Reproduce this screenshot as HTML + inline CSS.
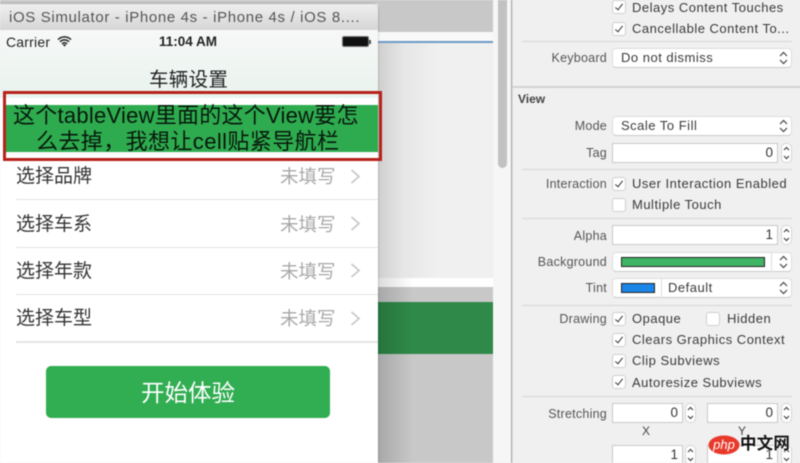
<!DOCTYPE html>
<html><head><meta charset="utf-8">
<style>
html,body{margin:0;padding:0;background:#f0f0f0}
#r{position:relative;width:800px;height:463px;overflow:hidden;background:#f0f0f0;font-family:"Liberation Sans","Noto Sans CJK SC",sans-serif;filter:blur(.45px)}
#r div,#r span.a,#r svg.a{position:absolute}
.t{white-space:nowrap;font-size:13px;line-height:16px;color:#3a3a3a;letter-spacing:.5px}
.l{white-space:nowrap;font-size:12.5px;line-height:16px;color:#555;text-align:right;right:193px;letter-spacing:.25px}
.cb{width:12px;height:12px;background:#fff;border:1px solid #cfcfcf;border-radius:3px;box-sizing:content-box}
.cb.on:after{content:"";position:absolute;left:4px;top:1px;width:3px;height:7px;border:solid #333;border-width:0 1.3px 1.3px 0;transform:rotate(38deg)}
.sel{background:#fff;border:1px solid #dedede;border-bottom-color:#cacaca;border-radius:4px;box-sizing:border-box}
.fld{background:#fff;border:1px solid #c8c8c8;box-sizing:border-box;text-align:right;font-size:13.5px;line-height:18px;padding-right:4px;color:#333}
.st{width:11px;height:20px;background:#fff;border:1px solid #d6d6d6;border-radius:5px;box-sizing:border-box}
.hr{left:522px;width:270px;height:1px;background:#d6d6d6}
.row{left:16px;font-size:19px;line-height:24px;color:#333;white-space:nowrap}
.nf{left:280px;font-size:18.5px;line-height:24px;color:#a8a8a8;white-space:nowrap}
.sp{left:16px;width:362px;height:1px;background:#e4e4e4}
</style></head><body><div id="r">

<!-- middle canvas -->
<div style="left:378px;top:0;width:115px;height:32px;background:#c8c8c8"></div>
<div style="left:378px;top:32px;width:115px;height:246px;background:linear-gradient(90deg,#cfcfcf 0,#e6e6e6 25px,#f0f0f0 60px)"></div>
<div style="left:378px;top:32px;width:115px;height:9px;background:#f8f8f8"></div>
<div style="left:378px;top:41px;width:115px;height:2px;background:#6d9bc6"></div>
<div style="left:378px;top:278px;width:115px;height:9px;background:linear-gradient(90deg,#dcdcdc,#fff 35px)"></div>
<div style="left:378px;top:287px;width:115px;height:15px;background:linear-gradient(90deg,#a8a8a8,#c8c8c8 35px)"></div>
<div style="left:378px;top:302px;width:115px;height:52px;background:linear-gradient(90deg,#26743d,#2f8a49 35px)"></div>
<div style="left:378px;top:354px;width:115px;height:109px;background:linear-gradient(90deg,#a8a8a8,#c8c8c8 35px)"></div>

<!-- scroller -->
<div style="left:493px;top:0;width:18px;height:463px;background:#f6f6f6"></div>
<div style="left:498px;top:-10px;width:9px;height:178px;background:#c2c2c2;border-radius:4.5px"></div>
<div style="left:511px;top:0;width:1px;height:463px;background:#a6a6a6"></div>
<div style="left:512px;top:0;width:1px;height:463px;background:#e0e0e0"></div>

<!-- simulator window -->
<div style="left:0;top:0;width:378px;height:4px;background:#c8c8c8"></div>
<div style="left:0;top:4px;width:378px;height:459px;background:#fff;border-radius:0 6px 0 0;overflow:hidden;box-shadow:0 0 2px rgba(0,0,0,.3)">
  <div style="left:0;top:0;width:378px;height:26px;background:linear-gradient(#eef0ee,#d6d6d6)"></div>
  <div class="t" style="left:9px;top:5px;font-size:15px;line-height:17px;color:#555;letter-spacing:.65px">iOS Simulator - iPhone 4s - iPhone 4s / iOS 8....</div>
  <div style="left:0;top:26px;width:378px;height:68px;background:linear-gradient(#f7f8f7,#e9f3ee)"></div>
</div>
<div class="t" style="left:6px;top:34px;font-size:14px;color:#222;letter-spacing:.2px">Carrier</div>
<svg class="a" style="left:57px;top:36px" width="15" height="11" viewBox="0 0 15 11"><path d="M1 3.600a9 9 0 0 1 13 0M3 5.800a6.200 6.200 0 0 1 9 0M5 8a3.200 3.200 0 0 1 5 0" fill="none" stroke="#222" stroke-width="1.500"/><path d="M7.500 10.600 5.900 8.900a2.200 2.200 0 0 1 3.200 0z" fill="#222"/></svg>
<div class="t" style="left:159px;top:34px;font-size:13.5px;font-weight:bold;color:#222;letter-spacing:0">11:04 AM</div>
<div style="left:342px;top:36px;width:27px;height:11px;background:#111;border:1px solid #777;border-radius:2px;box-sizing:border-box"></div>
<div style="left:369px;top:40px;width:2px;height:4px;background:#555"></div>
<div class="t" style="left:149px;top:68px;font-size:19.500px;line-height:24px;color:#222;letter-spacing:.3px">车辆设置</div>

<!-- green view -->
<div style="left:4px;top:105px;width:374px;height:47px;background:#2eab4f"></div>
<div style="left:4px;top:152px;width:374px;height:3px;background:#fafafa"></div>
<div class="t" style="left:13px;top:103px;font-size:22px;line-height:26px;color:#08180c;letter-spacing:.25px">这个tableView里面的这个View要怎</div>
<div class="t" style="left:36px;top:129px;font-size:22px;line-height:26px;color:#08180c;letter-spacing:.4px">么去掉，我想让cell贴紧导航栏</div>
<div style="left:3px;top:91px;width:379px;height:70px;border:3px solid #b8211a;box-sizing:border-box"></div>

<!-- rows -->
<div class="row" style="top:165px">选择品牌</div><div class="nf" style="top:165px">未填写</div>
<div class="sp" style="top:199px"></div>
<div class="row" style="top:213px">选择车系</div><div class="nf" style="top:213px">未填写</div>
<div class="sp" style="top:247px"></div>
<div class="row" style="top:260px">选择年款</div><div class="nf" style="top:260px">未填写</div>
<div class="sp" style="top:294px"></div>
<div class="row" style="top:307px">选择车型</div><div class="nf" style="top:307px">未填写</div>
<div class="sp" style="top:341px;height:2px"></div>
<svg class="a" style="left:348px;top:166px" width="14" height="170" viewBox="0 0 14 170"><g fill="none" stroke="#c8c8c8" stroke-width="1.700"><path d="M3.500 4l7.500 6.500-7.500 6.500M3.500 51l7.500 6.500-7.500 6.500M3.500 98l7.500 6.500-7.500 6.500M3.500 146l7.500 6.500-7.500 6.500"/></g></svg>
<div style="left:46px;top:366px;width:284px;height:52px;background:#31ad52;border-radius:5px"></div>
<div style="left:46px;top:367px;width:284px;height:52px;line-height:52px;text-align:center;color:#fff;font-size:23.500px;letter-spacing:0">开始体验</div>

<!-- inspector -->
<div class="cb on" style="left:612px;top:0"></div><div class="t" style="left:632px;top:0">Delays Content Touches</div>
<div class="cb on" style="left:612px;top:22px"></div><div class="t" style="left:632px;top:21px">Cancellable Content To...</div>
<div class="hr" style="top:41px"></div>
<div class="l" style="top:50px">Keyboard</div>
<div class="sel" style="left:612px;top:48px;width:180px;height:20px"></div>
<div class="t" style="left:621px;top:50px">Do not dismiss</div>
<div style="left:512px;top:86px;width:288px;height:2px;background:#d2d2d2"></div>
<div class="t" style="left:518px;top:91px;font-size:12px;font-weight:bold;color:#444;letter-spacing:0">View</div>
<div class="l" style="top:118px">Mode</div>
<div class="sel" style="left:612px;top:116px;width:180px;height:20px"></div>
<div class="t" style="left:621px;top:118px">Scale To Fill</div>
<div class="l" style="top:145px">Tag</div>
<div class="fld" style="left:612px;top:143px;width:166px;height:20px">0</div>
<div class="st" style="left:781px;top:143px"></div>
<div class="hr" style="top:169px"></div>
<div class="l" style="top:176px">Interaction</div>
<div class="cb on" style="left:612px;top:177px"></div><div class="t" style="left:632px;top:176px">User Interaction Enabled</div>
<div class="cb" style="left:612px;top:198px"></div><div class="t" style="left:632px;top:197px">Multiple Touch</div>
<div class="hr" style="top:218px"></div>
<div class="l" style="top:228px">Alpha</div>
<div class="fld" style="left:612px;top:225px;width:166px;height:20px">1</div>
<div class="st" style="left:781px;top:225px"></div>
<div class="l" style="top:254px">Background</div>
<div class="sel" style="left:612px;top:252px;width:180px;height:20px"></div>
<div style="left:621px;top:257px;width:144px;height:10px;background:#3fb565;border:1px solid #222;box-sizing:border-box"></div>
<div style="left:771px;top:252px;width:1px;height:20px;background:#ddd"></div>
<div class="l" style="top:280px">Tint</div>
<div class="sel" style="left:612px;top:278px;width:180px;height:20px"></div>
<div style="left:621px;top:283px;width:34px;height:10px;background:#1a87e8;border:1px solid #222;box-sizing:border-box"></div>
<div style="left:661px;top:278px;width:1px;height:20px;background:#ddd"></div>
<div class="t" style="left:668px;top:280px">Default</div>
<div class="hr" style="top:305px"></div>
<div class="l" style="top:311px">Drawing</div>
<div class="cb on" style="left:612px;top:312px"></div><div class="t" style="left:632px;top:311px">Opaque</div>
<div class="cb" style="left:706px;top:312px"></div><div class="t" style="left:727px;top:311px">Hidden</div>
<div class="cb on" style="left:612px;top:333px"></div><div class="t" style="left:632px;top:332px">Clears Graphics Context</div>
<div class="cb on" style="left:612px;top:354px"></div><div class="t" style="left:632px;top:353px">Clip Subviews</div>
<div class="cb on" style="left:612px;top:375px"></div><div class="t" style="left:632px;top:375px">Autoresize Subviews</div>
<div class="hr" style="top:396px"></div>
<div class="l" style="top:406px">Stretching</div>
<div class="fld" style="left:612px;top:403px;width:71px;height:20px">0</div>
<div class="st" style="left:685px;top:403px"></div>
<div class="fld" style="left:707px;top:403px;width:71px;height:20px">0</div>
<div class="st" style="left:781px;top:403px"></div>
<div class="t" style="left:642px;top:423px;font-size:12px;color:#444">X</div>
<div class="t" style="left:738px;top:423px;font-size:12px;color:#444">Y</div>
<div class="fld" style="left:612px;top:445px;width:71px;height:20px">1</div>
<div class="st" style="left:685px;top:445px"></div>
<div class="fld" style="left:707px;top:445px;width:71px;height:20px">1</div>
<div class="st" style="left:781px;top:445px"></div>

<!-- stepper and popup arrows -->
<svg class="a" style="left:0;top:0" width="800" height="463" viewBox="0 0 800 463"><g fill="none" stroke="#444" stroke-width="1.200"><path d="M780 56l3.500-3.500 3.500 3.500M780 60l3.500 3.500 3.500-3.500M780 124l3.500-3.500 3.500 3.500M780 128l3.500 3.500 3.500-3.500M780 260l3.500-3.500 3.500 3.500M780 264l3.500 3.500 3.500-3.500M780 286l3.500-3.500 3.500 3.500M780 290l3.500 3.500 3.500-3.500"/><path d="M784 150l2.500-2.500 2.500 2.500M784 156l2.500 2.500 2.500-2.500M784 232l2.500-2.500 2.500 2.500M784 238l2.500 2.500 2.500-2.500M688 410l2.500-2.500 2.500 2.500M688 416l2.500 2.500 2.500-2.500M784 410l2.500-2.500 2.500 2.500M784 416l2.500 2.500 2.500-2.500M688 452l2.500-2.500 2.500 2.500M688 458l2.500 2.500 2.500-2.500M784 452l2.500-2.500 2.500 2.500M784 458l2.500 2.500 2.500-2.500"/></g></svg>

<!-- watermark -->
<svg class="a" style="left:708px;top:435px" width="32" height="20" viewBox="0 0 32 20"><ellipse cx="16" cy="10" rx="15.500" ry="9.500" fill="#e8392b"/><text x="16" y="14" text-anchor="middle" font-family="Liberation Sans" font-style="italic" font-size="13" fill="#fff">php</text></svg>
<div class="t" style="left:740px;top:434px;font-size:16.500px;line-height:20px;color:#111;font-weight:bold;letter-spacing:.2px;text-shadow:0 0 2px #fff">中文网</div>
</div></body></html>
